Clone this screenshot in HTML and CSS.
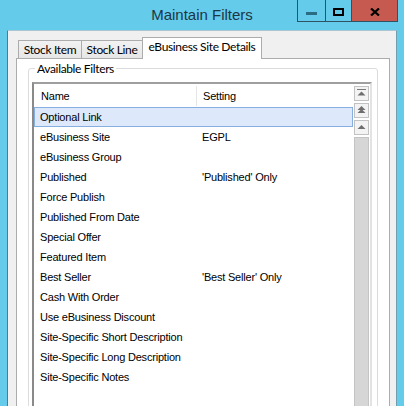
FILE: index.html
```html
<!DOCTYPE html>
<html>
<head>
<meta charset="utf-8">
<link rel="stylesheet" href="styles.css">
</head>
<body>
<div class="window">
  <div class="titlebar">
    <div class="tb-spacer"></div>
    <div class="title">Maintain Filters</div>
    <div class="controls">
      <div class="cbtn cbtn-min"><span class="min-glyph"></span></div>
      <div class="cbtn cbtn-max"><span class="max-glyph"></span></div>
      <div class="cbtn cbtn-close">
        <svg width="10" height="8" viewBox="0 0 10 8"><path d="M1 0.5 L9 7.5 M9 0.5 L1 7.5" stroke="#000" stroke-width="2.2" fill="none"/></svg>
      </div>
    </div>
  </div>
  <div class="client">
    <div class="tabs">
      <div class="tab tab-1">Stock Item</div>
      <div class="tab tab-2">Stock Line</div>
      <div class="tab tab-3 active">eBusiness Site Details</div>
    </div>
    <div class="panel">
      <fieldset class="group">
        <legend class="group-label">Available Filters</legend>
        <div class="list">
          <div class="list-body">
            <div class="list-header">
              <div class="hcell c1">Name</div>
              <div class="hcell c2">Setting</div>
            </div>
            <div class="rows">
              <div class="row selected"><div class="cell c1">Optional Link</div><div class="cell c2"></div></div>
              <div class="row"><div class="cell c1">eBusiness Site</div><div class="cell c2">EGPL</div></div>
              <div class="row"><div class="cell c1">eBusiness Group</div><div class="cell c2"></div></div>
              <div class="row"><div class="cell c1">Published</div><div class="cell c2">'Published' Only</div></div>
              <div class="row"><div class="cell c1">Force Publish</div><div class="cell c2"></div></div>
              <div class="row"><div class="cell c1">Published From Date</div><div class="cell c2"></div></div>
              <div class="row"><div class="cell c1">Special Offer</div><div class="cell c2"></div></div>
              <div class="row"><div class="cell c1">Featured Item</div><div class="cell c2"></div></div>
              <div class="row"><div class="cell c1">Best Seller</div><div class="cell c2">'Best Seller' Only</div></div>
              <div class="row"><div class="cell c1">Cash With Order</div><div class="cell c2"></div></div>
              <div class="row"><div class="cell c1">Use eBusiness Discount</div><div class="cell c2"></div></div>
              <div class="row"><div class="cell c1">Site-Specific Short Description</div><div class="cell c2"></div></div>
              <div class="row"><div class="cell c1">Site-Specific Long Description</div><div class="cell c2"></div></div>
              <div class="row"><div class="cell c1">Site-Specific Notes</div><div class="cell c2"></div></div>
            </div>
          </div>
          <div class="scrollbar">
            <div class="sb-btn">
              <svg width="13" height="13" viewBox="0 0 13 13"><rect x="2" y="2" width="9" height="1" fill="#7a7a7a"/><polygon points="6.5,4.5 10.5,8.5 2.5,8.5" fill="#6e6e6e"/></svg>
            </div>
            <div class="sb-btn">
              <svg width="13" height="13" viewBox="0 0 13 13"><polygon points="6.5,2 10.5,6 2.5,6" fill="#6e6e6e"/><polygon points="6.5,5 10.5,9 2.5,9" fill="#6e6e6e"/></svg>
            </div>
            <div class="sb-btn">
              <svg width="13" height="13" viewBox="0 0 13 13"><polygon points="6.5,4 10.5,8 2.5,8" fill="#6e6e6e"/></svg>
            </div>
            <div class="sb-track"></div>
          </div>
        </div>
      </fieldset>
    </div>
  </div>
</div>
</body>
</html>
```
FILE: styles.css
```css
html, body {
  margin: 0;
  padding: 0;
}
body {
  width: 404px;
  height: 406px;
  overflow: hidden;
  font-family: "Liberation Sans", Arial, sans-serif;
}
.window {
  width: 404px;
  height: 406px;
  box-sizing: border-box;
  padding: 0 7px;
  background: #64cbea;
  display: flex;
  flex-direction: column;
  overflow: hidden;
}
.titlebar {
  height: 30px;
  flex: none;
  display: grid;
  grid-template-columns: 1fr auto 1fr;
  margin: 0 -7px;
}
.title {
  font-size: 15px;
  line-height: 30px;
  color: #1d3646;
  white-space: nowrap;
}
.controls {
  justify-self: end;
  align-self: start;
  margin-right: 6px;
  height: 22px;
  box-sizing: border-box;
  display: flex;
  border: 1px solid #2f5265;
  border-top: none;
}
.cbtn {
  display: flex;
  align-items: center;
  justify-content: center;
  height: 21px;
}
.cbtn-min {
  width: 27px;
}
.cbtn-max {
  width: 25px;
  border-left: 1px solid #2f5265;
}
.cbtn-close {
  width: 45px;
  border-left: 1px solid #2f5265;
  background: #c75a50;
}
.min-glyph {
  display: block;
  width: 11px;
  height: 3px;
  margin-top: 5px;
  background: #2b6b83;
}
.max-glyph {
  display: block;
  width: 11px;
  height: 8px;
  box-sizing: border-box;
  border: 2px solid #000;
  margin-top: 2px;
}
.cbtn-close svg {
  display: block;
  margin-top: 2px;
}
.client {
  flex: none;
  height: 420px;
  background: #f0f0f0;
  border-left: 1px solid #4d7c8e;
  border-right: 1px solid #6f9eb0;
  border-top: 1px solid #a9c6d2;
  padding: 6px 6px 0 8px;
  display: flex;
  flex-direction: column;
}
.tabs {
  display: flex;
  align-items: flex-end;
  height: 21px;
  padding-left: 2px;
  font-family: Lato, "Liberation Sans", sans-serif;
  font-size: 12px;
  letter-spacing: -0.35px;
  color: #000;
}
.tab {
  box-sizing: border-box;
  height: 18px;
  line-height: 17px;
  text-align: center;
  border: 1px solid #acacac;
  border-bottom: none;
  background: linear-gradient(#f2f2f2, #e6e6e6);
  white-space: nowrap;
}
.tab-1 {
  width: 64px;
}
.tab-2 {
  width: 62px;
  margin-left: -1px;
}
.tab-3 {
  width: 120px;
  margin-left: -1px;
}
.tab.active {
  height: 22px;
  line-height: 18px;
  background: #ffffff;
  margin-bottom: -1px;
  position: relative;
  z-index: 1;
}
.panel {
  flex: 1;
  background: #ffffff;
  border: 1px solid #acacac;
  display: flex;
  flex-direction: column;
}
.group {
  margin: 3px 11px 0 11px;
  padding: 7px 5px 0 3px;
  min-width: 0;
  border: 1px solid #dcdcdc;
  border-radius: 3px;
  flex: 1;
}
.group-label {
  margin-left: 3px;
  padding: 0 2px;
  font-family: Lato, "Liberation Sans", sans-serif;
  font-size: 12px;
  letter-spacing: -0.35px;
  line-height: 13px;
  color: #000;
}
.list {
  height: 340px;
  display: flex;
  border: 2px solid;
  border-color: #9f9f9f #e3e3e3 #e3e3e3 #8a8a8a;
  background: #fff;
}
.list-body {
  flex: 1;
  min-width: 0;
  font-size: 11px;
  letter-spacing: -0.2px;
  color: #000;
}
.list-header {
  height: 22px;
  box-sizing: border-box;
  padding-top: 2px;
  display: flex;
  line-height: 20px;
}
.hcell.c1 {
  width: 163px;
  box-sizing: border-box;
  padding-left: 7px;
  border-right: 1px solid #e5e5e5;
}
.hcell.c2 {
  flex: 1;
  padding-left: 6px;
}
.rows {
  margin-top: 1px;
}
.row {
  height: 20px;
  box-sizing: border-box;
  border: 1px solid transparent;
  display: flex;
  line-height: 18px;
  white-space: nowrap;
}
.row.selected {
  background: #dde9fa;
  border-color: #86aede;
}
.cell.c1 {
  width: 162px;
  padding-left: 5px;
  box-sizing: border-box;
}
.cell.c2 {
  flex: 1;
  padding-left: 5px;
}
.scrollbar {
  width: 17px;
  box-sizing: border-box;
  padding: 2px 1px 0 1px;
  display: flex;
  flex-direction: column;
  gap: 2px;
}
.sb-btn {
  width: 15px;
  height: 15px;
  box-sizing: border-box;
  border: 1px solid #c2c2c2;
  background: #f3f3f3;
  flex: none;
}
.sb-btn svg {
  display: block;
}
.sb-track {
  flex: 1;
  background: #d6d6d6;
  border: 1px solid #c4c4c4;
  width: 15px;
  box-sizing: border-box;
}
```
